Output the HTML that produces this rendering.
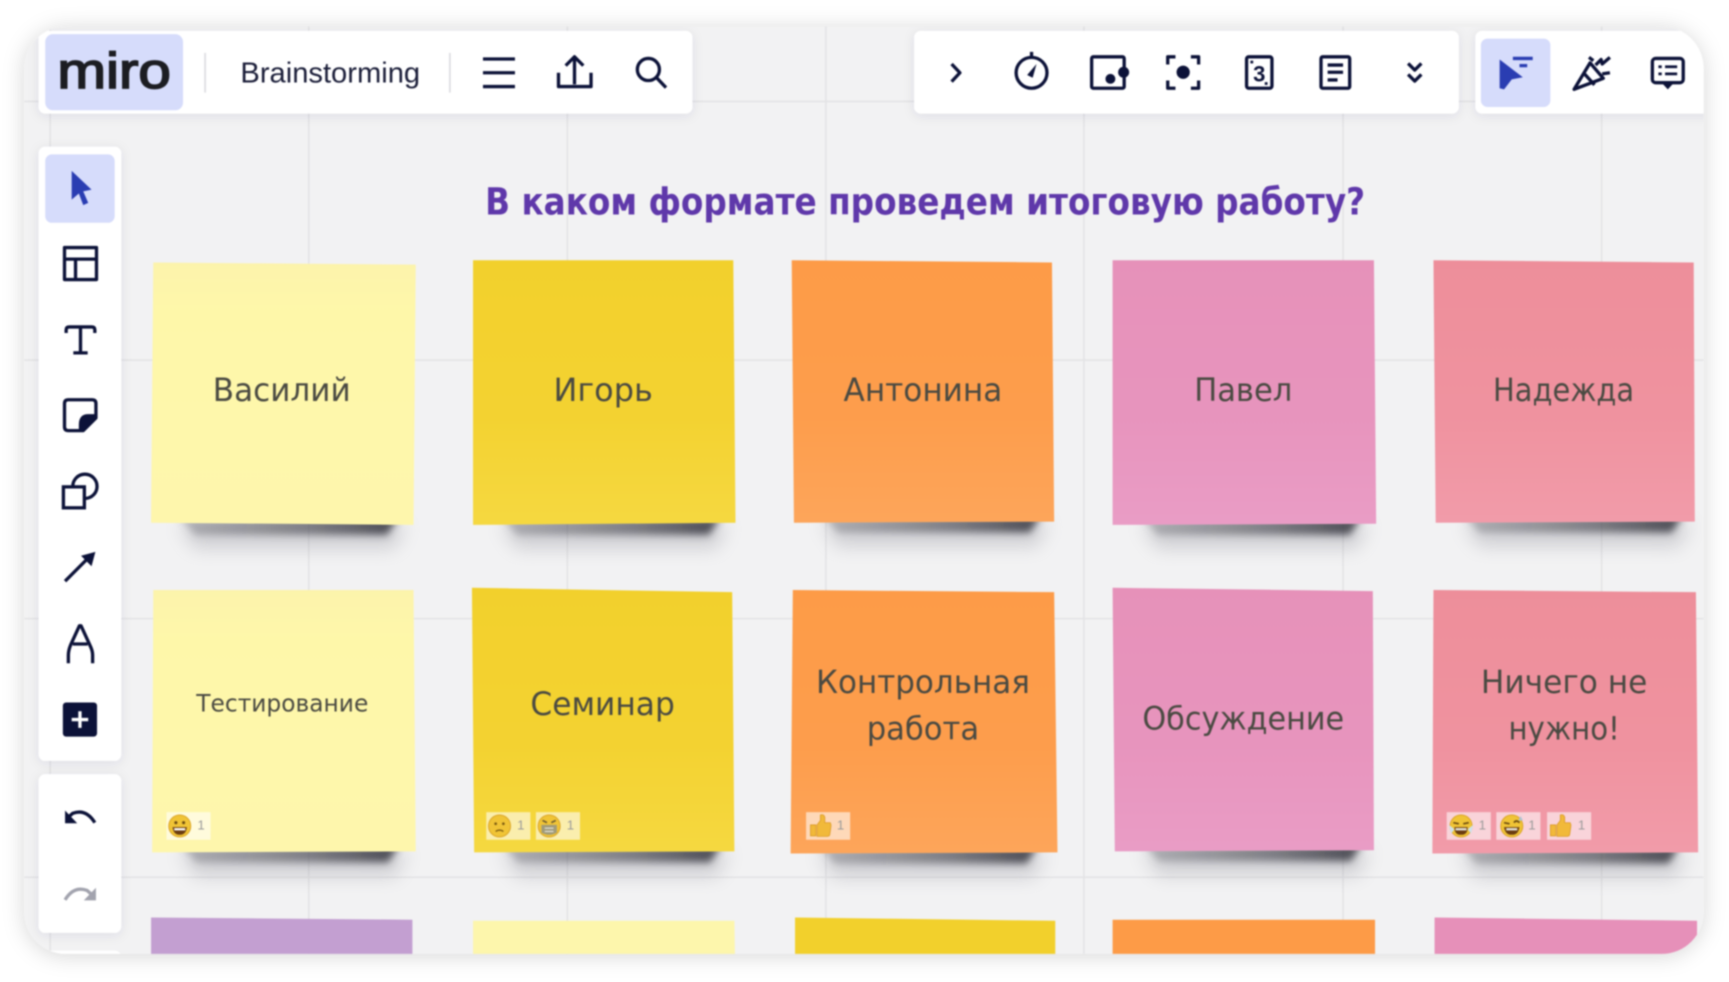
<!DOCTYPE html>
<html lang="ru"><head><meta charset="utf-8"><title>Miro Brainstorming</title>
<style>
html,body{margin:0;padding:0;width:1729px;height:982px;overflow:hidden;background:#fff}
svg{display:block;width:1729px;height:982px;filter:blur(.7px)}
.s{font-family:"DejaVu Sans","Liberation Sans",sans-serif;font-size:29px;fill:#4a4a42;text-anchor:start}
.c{font-family:"Liberation Sans",sans-serif;font-size:12px;fill:#9a9a9a}
.i{fill:none;stroke:#0c1238;stroke-width:3;stroke-linecap:butt;stroke-linejoin:round}
.f{fill:#0c1238}
</style></head><body>
<svg viewBox="0 0 1568 890.5" xmlns="http://www.w3.org/2000/svg" preserveAspectRatio="none">
<defs>
<filter id="cs" x="-5%" y="-5%" width="110%" height="110%"><feDropShadow dx="0" dy="2" stdDeviation="10" flood-color="#000" flood-opacity=".16"/></filter>
<filter id="ps" x="-20%" y="-20%" width="140%" height="140%"><feDropShadow dx="0" dy="2" stdDeviation="5" flood-color="#20204a" flood-opacity=".09"/></filter>
<filter id="b3" x="-20%" y="-200%" width="140%" height="500%"><feGaussianBlur stdDeviation="3.5"/></filter>
<filter id="b8" x="-20%" y="-200%" width="140%" height="500%"><feGaussianBlur stdDeviation="8"/></filter>
<clipPath id="cv"><rect x="22" y="24" width="1523" height="841" rx="38"/></clipPath>
<linearGradient id="gl" x1="0" y1="0" x2="0" y2="1"><stop offset="0" stop-color="#fcf3ab"/><stop offset=".2" stop-color="#fef7a9"/><stop offset="1" stop-color="#fef6ac"/></linearGradient>
<linearGradient id="gy" x1="0" y1="0" x2="0" y2="1"><stop offset="0" stop-color="#f2d02c"/><stop offset=".6" stop-color="#f3d231"/><stop offset="1" stop-color="#f5d840"/></linearGradient>
<linearGradient id="go" x1="0" y1="0" x2="0" y2="1"><stop offset="0" stop-color="#fd9b47"/><stop offset=".6" stop-color="#fd9d4c"/><stop offset="1" stop-color="#fda55a"/></linearGradient>
<linearGradient id="gp" x1="0" y1="0" x2="0" y2="1"><stop offset="0" stop-color="#e691b9"/><stop offset=".6" stop-color="#e794bd"/><stop offset="1" stop-color="#e99cc5"/></linearGradient>
<linearGradient id="gr" x1="0" y1="0" x2="0" y2="1"><stop offset="0" stop-color="#ed8e9a"/><stop offset=".6" stop-color="#ef929f"/><stop offset="1" stop-color="#f19ba9"/></linearGradient>
<linearGradient id="sg" x1="0" y1="0" x2="1" y2="0"><stop offset="0" stop-color="#55555e" stop-opacity=".35"/><stop offset=".6" stop-color="#45454e" stop-opacity=".65"/><stop offset=".95" stop-color="#35353e" stop-opacity=".85"/></linearGradient>
<g id="sh">
<path d="M24 0H232L220 22H40Z" fill="#8a8a94" opacity=".32" filter="url(#b8)"/>
<path d="M26 -6H224L214 9H40Z" fill="url(#sg)" filter="url(#b3)"/>
</g>
<g id="face"><circle cx="0" cy="0" r="10" fill="#f0c436"/><circle r="10" fill="none" stroke="#d8a020" stroke-width=".8"/></g>
<g id="grin"><use href="#face"/><circle cx="-3.5" cy="-3" r="1.4" fill="#6a4a10"/><circle cx="3.5" cy="-3" r="1.4" fill="#6a4a10"/><path d="M-6.5 1H6.5C6 6.5 3 8 0 8S-6 6.5-6.5 1Z" fill="#6a3c10"/><path d="M-5 2H5V4H-5Z" fill="#fff"/></g>
<g id="sad"><use href="#face"/><circle cx="-3.5" cy="-2" r="1.2" fill="#7a5a10"/><circle cx="3.5" cy="-2" r="1.2" fill="#7a5a10"/><path d="M-3.5 5Q0 2.5 3.5 5" fill="none" stroke="#7a5a10" stroke-width="1.2"/></g>
<g id="mask"><use href="#face"/><path d="M-6-5L-2-3M6-5L2-3" stroke="#6a5a30" stroke-width="1.5"/><path d="M-7-1H7V6Q0 10-7 6Z" fill="#a09a78"/><path d="M-4 2H4M-4 5H4" stroke="#e8e8e0" stroke-width="1"/></g>
<g id="cry"><use href="#face"/><path d="M-7-3L-2-2M7-3L2-2" stroke="#6a4a10" stroke-width="1.5"/><path d="M-6 1H6C6 7 3 8 0 8S-6 7-6 1Z" fill="#6a3c10"/><path d="M-11-1L-6 3L-9 7ZM11-1L6 3L9 7Z" fill="#cde2ee"/><path d="M-5 2H5V4H-5Z" fill="#e8e8e0"/></g>
<g id="joy"><use href="#face"/><path d="M-7-3L-2-2" stroke="#6a4a10" stroke-width="1.5"/><path d="M2-3Q4-6 7-3" fill="none" stroke="#6a4a10" stroke-width="1.5"/><path d="M-7 1H7C6 7 3 8 0 8S-6 7-7 1Z" fill="#6a3c10"/><path d="M-5 2H5V4H-5Z" fill="#e8e8e0"/><path d="M8-9L10-5L6-5Z" fill="#a9c3d8"/></g>
<g id="thumb"><path d="M-9-1H-4V9H-9ZM-3-1L0-5V-10Q3-11 4-8V-3H9Q10-1 9.5 1L8.5 8Q8 9.5 6 9.5H-3Z" fill="#f1b93a" stroke="#d69118" stroke-width=".6"/></g>
</defs>

<rect x="22" y="24" width="1523" height="841" rx="38" fill="#f2f2f3" filter="url(#cs)"/>
<g clip-path="url(#cv)">
<!-- grid -->
<g stroke="#e3e3e5" stroke-width="1.4" fill="none">
<path d="M45.5 24V865M280 24V865M514.5 24V865M749 24V865M983 24V865M1218 24V865M1452.5 24V865"/>
<path d="M22 92H1545M22 326.5H1545M22 561H1545M22 795.5H1545"/>
</g>

<!-- shadows -->
<use href="#sh" transform="translate(137,476)"/>
<use href="#sh" transform="translate(429,476)"/>
<use href="#sh" transform="translate(720,474)"/>
<use href="#sh" transform="translate(1010,476)"/>
<use href="#sh" transform="translate(1302,474)"/>
<use href="#sh" transform="translate(138,773)"/>
<use href="#sh" transform="translate(430,773)"/>
<use href="#sh" transform="translate(717,774)"/>
<use href="#sh" transform="translate(1011,772)"/>
<use href="#sh" transform="translate(1299,774)"/>

<!-- stickies row 1 -->
<polygon points="139,238 377,240 375,476 137,474" fill="url(#gl)"/>
<polygon points="429,236 665,236 667,474 429,476" fill="url(#gy)"/>
<polygon points="718,236 954,238 956,473 720,474" fill="url(#go)"/>
<polygon points="1009,236 1246,236 1248,475 1009,476" fill="url(#gp)"/>
<polygon points="1300,236 1536,238 1537,473 1302,474" fill="url(#gr)"/>
<!-- row 2 -->
<polygon points="139,535 375,535 377,772 138,773" fill="url(#gl)"/>
<polygon points="428,533 664,537 666,772 430,773" fill="url(#gy)"/>
<polygon points="719,535 956,537 959,773 717,774" fill="url(#go)"/>
<polygon points="1009,533 1245,536 1246,771 1011,772" fill="url(#gp)"/>
<polygon points="1300,535 1538,537 1540,773 1299,774" fill="url(#gr)"/>
<!-- row 3 -->
<polygon points="137,832 374,834 374,900 137,900" fill="#c39fd1"/>
<polygon points="429,835 666,835 667,900 429,900" fill="#fdf6ac"/>
<polygon points="721,832 957,835 957,900 721,900" fill="#f2d02c"/>
<polygon points="1009,834 1247,834 1247,900 1009,900" fill="#fd9b47"/>
<polygon points="1301,832 1539,835 1539,900 1301,900" fill="#e690b9"/>

<!-- title -->
<text x="440" y="194.5" textLength="798" lengthAdjust="spacingAndGlyphs" style="font-family:'DejaVu Sans','Liberation Sans',sans-serif;font-weight:700;font-size:33.5px;fill:#5f38aa">В каком формате проведем итоговую работу?</text>

<!-- sticky text -->
<text class="s" x="193" y="363.5" textLength="125" lengthAdjust="spacingAndGlyphs">Василий</text>
<text class="s" x="502" y="363.5" textLength="90" lengthAdjust="spacingAndGlyphs">Игорь</text>
<text class="s" x="765" y="363.5" textLength="144" lengthAdjust="spacingAndGlyphs">Антонина</text>
<text class="s" x="1083" y="363.5" textLength="89" lengthAdjust="spacingAndGlyphs">Павел</text>
<text class="s" x="1354" y="363.5" textLength="128" lengthAdjust="spacingAndGlyphs">Надежда</text>
<text class="s" x="178" y="645" textLength="156" lengthAdjust="spacingAndGlyphs" style="font-size:22px">Тестирование</text>
<text class="s" x="481" y="648.5" textLength="131" lengthAdjust="spacingAndGlyphs">Семинар</text>
<text class="s" x="740" y="628.5" textLength="194" lengthAdjust="spacingAndGlyphs">Контрольная</text>
<text class="s" x="786" y="670.5" textLength="102" lengthAdjust="spacingAndGlyphs">работа</text>
<text class="s" x="1036" y="661.5" textLength="183" lengthAdjust="spacingAndGlyphs">Обсуждение</text>
<text class="s" x="1343" y="628.5" textLength="151" lengthAdjust="spacingAndGlyphs">Ничего не</text>
<text class="s" x="1368" y="670.5" textLength="101" lengthAdjust="spacingAndGlyphs">нужно!</text>

<!-- reactions -->
<g fill="#fff" opacity=".58">
<rect x="151" y="736.5" width="40" height="25"/>
<rect x="441" y="736.5" width="40" height="25"/><rect x="486" y="736.5" width="40" height="25"/>
<rect x="731" y="736.5" width="40" height="25"/>
<rect x="1312" y="736.5" width="40" height="25"/><rect x="1357" y="736.5" width="40" height="25"/><rect x="1403" y="736.5" width="40" height="25"/>
</g>
<use href="#grin" transform="translate(163,749)"/><text class="c" x="179" y="752">1</text>
<use href="#sad" transform="translate(453,749)"/><text class="c" x="469" y="752">1</text>
<use href="#mask" transform="translate(498,749)"/><text class="c" x="514" y="752">1</text>
<use href="#thumb" transform="translate(744,749)"/><text class="c" x="759" y="752">1</text>
<use href="#cry" transform="translate(1325,749)"/><text class="c" x="1341" y="752">1</text>
<use href="#joy" transform="translate(1371,749)"/><text class="c" x="1386" y="752">1</text>
<use href="#thumb" transform="translate(1415,749)"/><text class="c" x="1431" y="752">1</text>

<!-- top left panel -->
<rect x="35" y="28" width="593" height="75" rx="6" fill="#fff" filter="url(#ps)"/>
<rect x="41" y="31" width="125" height="69" rx="7" fill="#d6dcfb"/>
<text x="52" y="80" textLength="103" lengthAdjust="spacingAndGlyphs" stroke="#1c1d22" stroke-width="1.5" style="font-family:'Liberation Sans',sans-serif;font-size:45px;fill:#1c1d22">miro</text>
<path d="M186 48V84M408 48V84" stroke="#dcdce0" stroke-width="1.5"/>
<text x="218" y="75" textLength="163" lengthAdjust="spacingAndGlyphs" style="font-family:'Liberation Sans',sans-serif;font-size:26px;fill:#1c1f3a">Brainstorming</text>
<path class="i" d="M438 53.5H467M438 66H467M438 78.5H467"/>
<path class="i" d="M521 76.5V52M513 59.5L521 51.5L529 59.5M506.500 66V78.500H536V66"/>
<circle class="i" cx="588" cy="63" r="10"/><path class="i" d="M595 70L604 79.5"/>

<!-- top right panel 1 -->
<rect x="829" y="28" width="494" height="75" rx="6" fill="#fff" filter="url(#ps)"/>
<path class="i" d="M863 58L870.5 66L863 74"/>
<circle class="i" cx="935.5" cy="66" r="14"/><path class="i" d="M935.5 51V47"/><path d="M931.5 68L940 58L936.5 70.5Z" class="f"/>
<rect class="i" x="990" y="51.5" width="29.5" height="28.5" rx="1.5"/><circle class="f" cx="1007" cy="71.5" r="4.5"/><circle class="f" cx="1019" cy="65.5" r="5"/>
<path class="i" d="M1059 58.500V51.500H1066M1080 51.500H1087V58.500M1087 73V80H1080M1066 80H1059V73"/><circle class="f" cx="1073" cy="65.500" r="6"/>
<rect class="i" x="1130.500" y="51.500" width="23" height="28.500" rx="2"/><text x="1142" y="74" text-anchor="middle" style="font-family:'Liberation Sans',sans-serif;font-weight:700;font-size:20px;fill:#0c1238">3</text><rect class="f" x="1134" y="55" width="2.500" height="2.500"/><rect class="f" x="1147" y="74.500" width="2.500" height="2.500"/>
<rect class="i" x="1198" y="51.500" width="26" height="28.500" rx="1.500"/><path class="i" d="M1204 59H1218M1204 65.500H1218M1204 72.500H1213"/>
<path class="i" d="M1277 57.500L1283 63.500L1289 57.500M1277 67.500L1283 73.500L1289 67.500"/>

<!-- top right panel 2 -->
<rect x="1338" y="28" width="240" height="75" rx="6" fill="#fff" filter="url(#ps)"/>
<rect x="1343" y="35" width="63" height="62" rx="6" fill="#d6dcfb"/>
<path d="M1360 54L1381 70L1371 72L1364 81L1360 80Z" fill="#2a3db2"/>
<path d="M1372 53H1390" stroke="#2a3db2" stroke-width="3"/><path d="M1378 59.500H1385" stroke="#2a3db2" stroke-width="3"/>
<path class="i" d="M1427.500 81L1442 57L1454 71ZM1436 66L1446 77"/>
<path class="i" stroke-width="2.500" d="M1441 52L1445 55M1447 59L1452 54L1453 58L1460 52M1453 67L1460 66"/>
<rect class="i" x="1498.500" y="53" width="28" height="22" rx="3"/><path class="f" d="M1506 74H1519L1512.500 81Z"/><path d="M1504 60.500H1507M1510 60.500H1521M1504 67H1507M1510 67H1521" stroke="#0c1238" stroke-width="2.500"/>

<!-- left toolbar -->
<rect x="35" y="133" width="75" height="557" rx="6" fill="#fff" filter="url(#ps)"/>
<rect x="41" y="140" width="63" height="62" rx="6" fill="#d6dcfb"/>
<path d="M65 155L83 172L75.500 173.500L80 184L75.500 186L71.500 175.500L65 181Z" fill="#2a3db2"/>
<rect class="i" x="58.500" y="224.500" width="29" height="29"/><path class="i" d="M58.500 235H87.500M68.500 235V253"/>
<path class="i" stroke-width="2.500" d="M60 302V299Q60 296.500 63 296.500H83Q86 296.500 86 299V302"/><path class="i" stroke-width="2.500" d="M73 296.500V320M66.500 320H79.500"/>
<path class="i" d="M62 362.500H83.500Q87 362.500 87 366V379L75.500 390.500H62Q58.500 390.500 58.500 387V366Q58.500 362.500 62 362.500Z"/><path class="f" d="M87.500 375.500V380L76 391.500H71.500V385Q71.500 375.500 80 375.500Z"/>
<circle class="i" cx="77" cy="441" r="11"/><rect x="57.500" y="441.500" width="19" height="19" fill="#fff" stroke="#0c1238" stroke-width="3"/>
<path class="i" d="M59 527L80 506"/><path class="f" d="M86.500 500.500L83 513.500L73.500 504Z"/>
<path class="i" d="M62 601.500V594Q62 590 64 585L72 567.500H73.500L81.500 585Q84 590 84 594V601.500M66 584H79.500"/>
<rect class="f" x="57" y="637" width="31" height="31" rx="3"/><path d="M72.500 645V660M65 652.500H80" stroke="#fff" stroke-width="3"/>

<rect x="35" y="702" width="75" height="144" rx="6" fill="#fff" filter="url(#ps)"/>
<path class="i" d="M86 746Q78 733 66 737.500L62 741"/><path class="f" d="M59 735V746.500H70Z"/>
<path d="M59 816Q67 803 79 807.500L83 811" fill="none" stroke="#a2a3ae" stroke-width="3"/><path d="M87 805V816.500H76Z" fill="#a2a3ae"/>
<rect x="35" y="862" width="75" height="40" rx="6" fill="#fff"/>
</g>
</svg>
</body></html>
